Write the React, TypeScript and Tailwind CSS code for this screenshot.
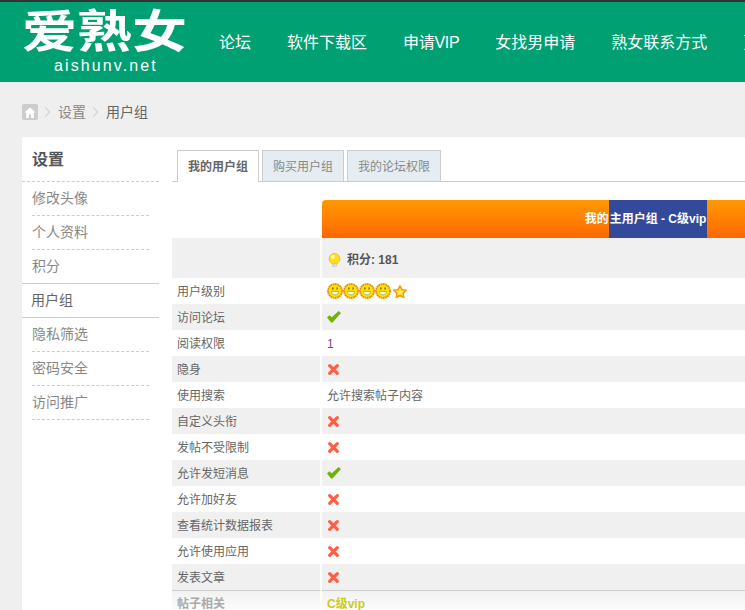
const font = "font-['Liberation_Sans','Noto_Sans_CJK_SC',sans-serif]";

const navItems = ["论坛", "软件下载区", "申请VIP", "女找男申请", "熟女联系方式", "更多"];
const sideItems = [
  { label: "修改头像" },
  { label: "个人资料" },
  { label: "积分", last: true },
  { label: "用户组", active: true },
  { label: "隐私筛选" },
  { label: "密码安全" },
  { label: "访问推广" },
];

type Row = { label: string; value: "yes" | "no" | "stars" | string };

const rows: Row[] = [
  { label: "用户级别", value: "stars" },
  { label: "访问论坛", value: "yes" },
  { label: "阅读权限", value: "1" },
  { label: "隐身", value: "no" },
  { label: "使用搜索", value: "允许搜索帖子内容" },
  { label: "自定义头衔", value: "no" },
  { label: "发帖不受限制", value: "no" },
  { label: "允许发短消息", value: "yes" },
  { label: "允许加好友", value: "no" },
  { label: "查看统计数据报表", value: "no" },
  { label: "允许使用应用", value: "no" },
  { label: "发表文章", value: "no" },
];

function Smiley() {
  return (
    <svg width="16" height="16" viewBox="0 0 16 16" className="block">
      <circle cx="8" cy="8" r="6.900" fill="#ffe600" stroke="#f08c00" strokeWidth="2" strokeDasharray="1.800 0.500" />
      <circle cx="8" cy="8" r="5.800" fill="#ffe600" />
      <rect x="5.300" y="4.400" width="1.200" height="2.200" fill="#6b5200" />
      <rect x="9.500" y="4.400" width="1.200" height="2.200" fill="#6b5200" />
      <path d="M4.400 8.400h7.200c0 2.300-1.700 3.500-3.600 3.500s-3.600-1.200-3.600-3.500z" fill="#fff" stroke="#a87a00" strokeWidth="0.600" />
    </svg>
  );
}

function Star() {
  return (
    <svg width="14" height="13" viewBox="0 0 14 13" className="block">
      <path d="M7 .8l1.900 3.900 4.300.6-3.100 3 .7 4.200L7 10.500l-3.800 2 .7-4.200-3.100-3 4.300-.6z" fill="#ffe95a" stroke="#f59a00" strokeWidth="1.500" strokeLinejoin="round" />
    </svg>
  );
}

function Check() {
  return (
    <svg width="14" height="12" viewBox="0 0 14 12" className="block">
      <path d="M0 6.500l2.400-2.300 2.400 2L11.600 0 14 2 5.500 11.500H4z" fill="#71b400" />
    </svg>
  );
}

function Cross() {
  return (
    <svg width="11" height="11" viewBox="0 0 11 11" className="block">
      <path d="M1.700 1.700l7.600 7.600M9.300 1.700L1.700 9.300" stroke="#fd5f45" strokeWidth="3.200" strokeLinecap="round" />
    </svg>
  );
}

function Bulb() {
  return (
    <svg width="13" height="14" viewBox="0 0 13 14" className="block">
      <circle cx="6.500" cy="5.800" r="5.400" fill="#ffe01e" stroke="#f0b400" strokeWidth="0.800" />
      <circle cx="4.800" cy="4" r="1.900" fill="#fff7a8" />
      <rect x="4.500" y="11" width="4" height="2.600" rx="0.800" fill="#e0e0e0" stroke="#b0b0b0" strokeWidth="0.500" />
    </svg>
  );
}

function Chevron() {
  return (
    <svg width="5" height="10" viewBox="0 0 5 10" className="ml-[7px] mr-[8px]">
      <path d="M.5.5L4.500 5 .5 9.500" fill="none" stroke="#c4c4c4" strokeWidth="1" />
    </svg>
  );
}

function Value({ value }: { value: string }) {
  if (value === "yes") return <Check />;
  if (value === "no")
    return (
      <span className="pl-[1px]">
        <Cross />
      </span>
    );
  if (value === "stars")
    return (
      <div className="flex items-center">
        <Smiley />
        <Smiley />
        <Smiley />
        <Smiley />
        <span className="ml-[2px]">
          <Star />
        </span>
      </div>
    );
  if (value === "1") return <span className="pt-[2px] text-[#7b3f98]">1</span>;
  return <span className="pt-[2px]">{value}</span>;
}

export default function App() {
  return (
    <div className={`${font} h-[610px] w-[745px] overflow-hidden bg-[#efefef] text-xs text-[#666]`}>
      <header className="h-[82px] border-t-2 border-[#333] bg-[#00a073]">
        <div className="flex w-[1000px] pl-[22px]">
          <div className="flex w-[179px] shrink-0 flex-col items-start text-white">
            <div className="mt-[8px] h-[45px] w-[166px] origin-top scale-y-[0.82] text-[55px] leading-[55px] font-bold whitespace-nowrap">爱熟女</div>
            <div className="pt-[2px] pl-[32px] text-[16px] leading-[18px] tracking-[2.100px]">aishunv.net</div>
          </div>
          <nav className="flex h-[80px] items-center pt-[2px]">
            {navItems.map((item) => (
              <a key={item} className={`px-[18px] text-base whitespace-nowrap text-white ${item === "申请VIP" ? "tracking-[-0.3px]" : ""}`}>
                {item}
              </a>
            ))}
          </nav>
        </div>
      </header>

      <div className="flex h-[55px] items-center pl-[22px] pt-[5px] text-sm">
        <span className="flex h-4 w-4 items-center justify-center rounded-[2px] bg-[#ccc]">
          <svg width="12" height="11" viewBox="0 0 12 11">
            <path d="M6 .6L.4 5.600h1.800V11h2.700V7.400h2.200V11h2.700V5.600h1.800z" fill="#fff" />
          </svg>
        </span>
        <Chevron />
        <span className="text-[#888]">设置</span>
        <Chevron />
        <span className="text-[#666]">用户组</span>
      </div>

      <main className="ml-[22px] flex h-[480px] w-[1000px] bg-white">
        <aside className="w-[137px] shrink-0">
          <h2 className="h-[45px] border-b border-dashed border-[#ccc] pl-[10px] text-base leading-[45px] font-bold text-[#555]">设置</h2>
          {sideItems.map((item) =>
            item.active ? (
              <div key={item.label} className="-mt-[1px] h-[35px] border-y border-[#ccc] pl-[9px] text-sm leading-[33px] text-[#666]">
                {item.label}
              </div>
            ) : (
              <div key={item.label} className="px-[10px]">
                <div className={`h-[34px] text-sm leading-[33px] text-[#888] ${item.last ? "" : "border-b border-dashed border-[#ccc]"}`}>
                  {item.label}
                </div>
              </div>
            ),
          )}
        </aside>

        <section className="min-w-0 flex-1 pt-[13px] pl-[13px]">
          <div className="flex h-[32px] gap-[3px] border-b border-[#ccc] pl-[5px] text-xs">
            <div className="h-[32px] border border-b-0 border-[#ccc] bg-white px-[10px] leading-[33px] font-bold text-[#666]">我的用户组</div>
            <div className="h-[31px] border border-b-0 border-[#ccc] bg-[#e5edf2] px-[10px] leading-[32px] text-[#888]">购买用户组</div>
            <div className="h-[31px] border border-b-0 border-[#ccc] bg-[#e5edf2] px-[10px] leading-[32px] text-[#888]">我的论坛权限</div>
          </div>

          <div className="mt-[18px] grid grid-cols-[148px_648px] gap-x-[2px]">
            <div className="h-[38px]" />
            <div className="flex h-[38px] justify-center rounded-tl-[4px] bg-gradient-to-b from-[#ff9900] to-[#ff6600] text-xs leading-[39px] font-bold text-white">
              <span>我的</span>
              <span className="bg-[#334a9b] px-[1px]">主用户组 - C级vip</span>
            </div>

            <div className="h-[40px] bg-[#f0f0f0]" />
            <div className="flex h-[40px] items-center gap-[6px] bg-[#f0f0f0] pt-[3px] pl-[6px] font-bold text-[#555]">
              <Bulb />
              积分: 181
            </div>

            {rows.map((row, i) => {
              const bg = i % 2 === 1 ? "bg-[#f0f0f0]" : "bg-white";
              return [
                <div key={row.label} className={`flex h-[26px] items-center pt-[2px] pl-[5px] ${bg}`}>
                  {row.label}
                </div>,
                <div key={row.label + "-v"} className={`flex h-[26px] items-center pl-[5px] ${bg}`}>
                  <Value value={row.value} />
                </div>,
              ];
            })}

            <div className="flex h-[26px] items-center border-t border-[#ccc] bg-gradient-to-b from-[#f2f2f2] to-white pl-[5px] font-bold text-[#aaa]">帖子相关</div>
            <div className="flex h-[26px] items-center border-t border-[#ccc] bg-gradient-to-b from-[#f2f2f2] to-white pl-[5px] font-bold text-[#cccc11]">C级vip</div>
          </div>
        </section>
      </main>
    </div>
  );
}
